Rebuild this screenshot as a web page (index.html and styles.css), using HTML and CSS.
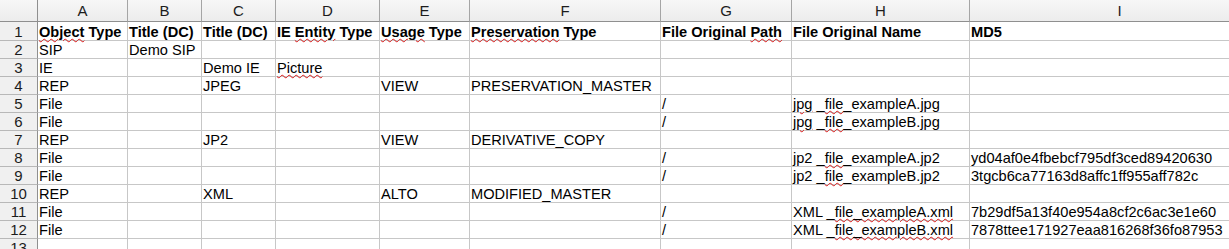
FILE: index.html
```html
<!DOCTYPE html>
<html lang="en">
<head>
<meta charset="UTF-8">
<title>Sheet1</title>
<link rel="stylesheet" href="styles.css">
</head>
<body>

<table class="sheet">
  <colgroup>
    <col class="c-num">
    <col class="c-a">
    <col class="c-b">
    <col class="c-c">
    <col class="c-d">
    <col class="c-e">
    <col class="c-f">
    <col class="c-g">
    <col class="c-h">
    <col class="c-i">
  </colgroup>
  <tr class="colhead">
    <th class="corner"></th>
    <th>A</th><th>B</th><th>C</th><th>D</th><th>E</th><th>F</th><th>G</th><th>H</th><th>I</th>
  </tr>
  <tr class="first">
    <th class="rownum">1</th>
    <td><span class="spell">Object</span> Type</td>
    <td>Title (DC)</td>
    <td>Title (DC)</td>
    <td>IE <span class="spell">Entity</span> Type</td>
    <td><span class="spell">Usage</span> Type</td>
    <td><span class="spell">Preservation</span> Type</td>
    <td>File Original <span class="spell">Path</span></td>
    <td>File Original Name</td>
    <td>MD5</td>
  </tr>
  <tr>
    <th class="rownum">2</th>
    <td>SIP</td><td>Demo SIP</td><td></td><td></td><td></td><td></td><td></td><td></td><td></td>
  </tr>
  <tr>
    <th class="rownum">3</th>
    <td>IE</td><td></td><td>Demo IE</td><td><span class="spell">Picture</span></td><td></td><td></td><td></td><td></td><td></td>
  </tr>
  <tr>
    <th class="rownum">4</th>
    <td>REP</td><td></td><td>JPEG</td><td></td><td>VIEW</td><td>PRESERVATION_MASTER</td><td></td><td></td><td></td>
  </tr>
  <tr>
    <th class="rownum">5</th>
    <td>File</td><td></td><td></td><td></td><td></td><td></td><td>/</td>
    <td><span class="spell">jpg</span> _<span class="spell">file</span>_exampleA.jpg</td><td></td>
  </tr>
  <tr>
    <th class="rownum">6</th>
    <td>File</td><td></td><td></td><td></td><td></td><td></td><td>/</td>
    <td><span class="spell">jpg</span> _<span class="spell">file</span>_exampleB.jpg</td><td></td>
  </tr>
  <tr>
    <th class="rownum">7</th>
    <td>REP</td><td></td><td>JP2</td><td></td><td>VIEW</td><td>DERIVATIVE_COPY</td><td></td><td></td><td></td>
  </tr>
  <tr>
    <th class="rownum">8</th>
    <td>File</td><td></td><td></td><td></td><td></td><td></td><td>/</td>
    <td>jp2 _<span class="spell">file</span>_exampleA.jp2</td><td>yd04af0e4fbebcf795df3ced89420630</td>
  </tr>
  <tr>
    <th class="rownum">9</th>
    <td>File</td><td></td><td></td><td></td><td></td><td></td><td>/</td>
    <td>jp2 _<span class="spell">file</span>_exampleB.jp2</td><td>3tgcb6ca77163d8affc1ff955aff782c</td>
  </tr>
  <tr>
    <th class="rownum">10</th>
    <td>REP</td><td></td><td>XML</td><td></td><td>ALTO</td><td>MODIFIED_MASTER</td><td></td><td></td><td></td>
  </tr>
  <tr>
    <th class="rownum">11</th>
    <td>File</td><td></td><td></td><td></td><td></td><td></td><td>/</td>
    <td>XML _<span class="spell">file_exampleA.xml</span></td><td>7b29df5a13f40e954a8cf2c6ac3e1e60</td>
  </tr>
  <tr>
    <th class="rownum">12</th>
    <td>File</td><td></td><td></td><td></td><td></td><td></td><td>/</td>
    <td>XML _<span class="spell">file_exampleB.xml</span></td><td>7878ttee171927eaa816268f36fo87953</td>
  </tr>
  <tr>
    <th class="rownum">13</th>
    <td></td><td></td><td></td><td></td><td></td><td></td><td></td><td></td><td></td>
  </tr>
</table>

</body>
</html>
```

FILE: styles.css
```css
html, body { margin: 0; padding: 0; background: #fff; overflow: hidden; }
body { font-family: "Liberation Sans", Arial, sans-serif; font-size: 14.6px; color: #000; }

.sheet { border-collapse: separate; border-spacing: 0; table-layout: fixed; width: 1270px; }
.c-num { width: 38px; }
.c-a { width: 90px; }
.c-b { width: 74px; }
.c-c { width: 74px; }
.c-d { width: 104px; }
.c-e { width: 90px; }
.c-f { width: 191px; }
.c-g { width: 131px; }
.c-h { width: 178px; }
.c-i { width: 300px; }

.sheet th, .sheet td { box-sizing: border-box; height: 18px; padding: 0 2px 0 1px; line-height: 16px; white-space: nowrap; vertical-align: bottom; text-align: left; font-weight: normal; border-right: 1px solid #c7c7c7; border-bottom: 1px solid #c7c7c7; }

.sheet .colhead th { height: 22px; background: linear-gradient(#f7f7f7, #ececec); border-right: 1px solid #a5a5a5; border-bottom: 1px solid #8f8f8f; text-align: center; vertical-align: middle; font-size: 15px; color: #1c1c1c; padding: 1px 0 0; }
.sheet .colhead .corner { border-right: 1px solid #8f8f8f; }

.sheet .rownum { background: #f0f0f0; text-align: center; font-size: 15px; color: #1c1c1c; overflow: hidden; padding: 0; border-right: 1px solid #8f8f8f; border-bottom: 1px solid #b8b8b8; }

.sheet .first th, .sheet .first td { height: 19px; }
.sheet .first td { font-weight: bold; }

.spell { text-decoration-line: underline; text-decoration-style: wavy; text-decoration-color: #d81818; text-decoration-thickness: 1px; text-underline-offset: 1px; }
```
